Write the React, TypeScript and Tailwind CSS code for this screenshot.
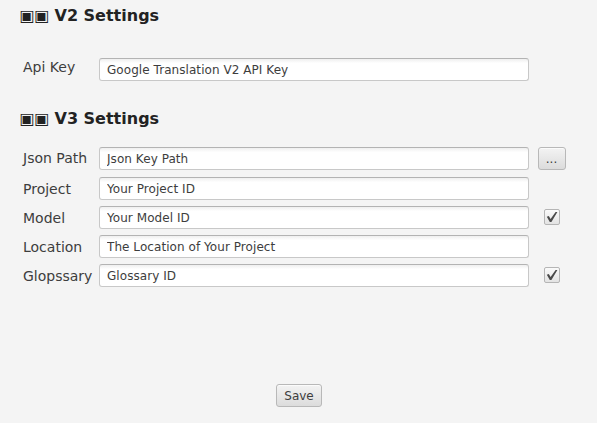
import React, { useState } from "react";

function Heading({ text }: { text: string }) {
  return <h2 className="ml-[19.5px] h-5 whitespace-pre text-[16px] leading-5 font-bold text-[#222]"><span className="tracking-[-0.4px]">▣▣</span>{text}</h2>;
}

function CheckBox({ label }: { label: string }) {
  const [checked, setChecked] = useState(true);
  return (
    <button
      role="checkbox"
      aria-checked={checked}
      aria-label={label}
      onClick={() => setChecked(!checked)}
      className="mb-[2px] ml-[6px] flex size-4 items-center justify-center rounded-[2px] border border-[#b5b5b5] bg-linear-to-b from-[#fafafa] to-[#e3e3e3]"
    >
      {checked && (
        <svg width="12" height="12" viewBox="0 0 12 12" className="shrink-0">
          <path d="M0.8 5.8 L2.8 5 L4.6 8 L9.6 1 L11.4 1 L5.4 11 L3.8 11 Z" fill="#4a4a4a" />
        </svg>
      )}
    </button>
  );
}

function Field({ label, value, offset = "", children }: { label: string; value: string; offset?: string; children?: React.ReactNode }) {
  return (
    <div className="flex h-[23px] items-center">
      <label className={`w-[76px] shrink-0 whitespace-nowrap text-[14px] leading-5 text-[#3d3d3d] ${offset}`}>{label}</label>
      <input
        aria-label={label}
        defaultValue={value}
        className="h-[23px] w-[430px] shrink-0 rounded-[3px] border border-[#c8c8c8] border-t-[#b3b3b3] bg-white bg-linear-to-b from-[#efefef] via-white via-20% to-white px-[7px] text-[12px] tracking-[0.06px] text-[#3d3d3d] outline-none"
      />
      <div className="ml-[9px] flex w-7 items-center">{children}</div>
    </div>
  );
}

const buttonStyle =
  "h-[23px] rounded-[3px] border border-[#b8b8b8] bg-linear-to-b from-[#f3f3f3] to-[#dcdcdc] pt-px text-[12px] leading-5 text-[#3d3d3d] shadow-[inset_0_1px_0_#fbfbfb]";

export default function App() {
  return (
    <main className="flex h-[423px] w-[597px] flex-col overflow-hidden bg-[#f4f4f4] pt-[6px] font-['DejaVu_Sans',sans-serif]">
      <Heading text=" V2 Settings" />
      <section className="mt-8 ml-[23px]">
        <Field label="Api Key" value="Google Translation V2 API Key" offset="pb-[5px]" />
      </section>
      <div className="mt-7">
        <Heading text=" V3 Settings" />
      </div>
      <section className="mt-[18px] ml-[23px] flex flex-col gap-[6px]">
        <div className="mb-px">
          <Field label="Json Path" value="Json Key Path" offset="pb-[2px]">
            <button className={`w-7 pr-px ${buttonStyle}`}>...</button>
          </Field>
        </div>
        <Field label="Project" value="Your Project ID" />
        <Field label="Model" value="Your Model ID">
          <CheckBox label="Use model" />
        </Field>
        <Field label="Location" value="The Location of Your Project" />
        <Field label="Glopssary" value="Glossary ID">
          <CheckBox label="Use glossary" />
        </Field>
      </section>
      <button className={`mt-[97px] ml-[276px] w-[46px] ${buttonStyle}`}>Save</button>
    </main>
  );
}
